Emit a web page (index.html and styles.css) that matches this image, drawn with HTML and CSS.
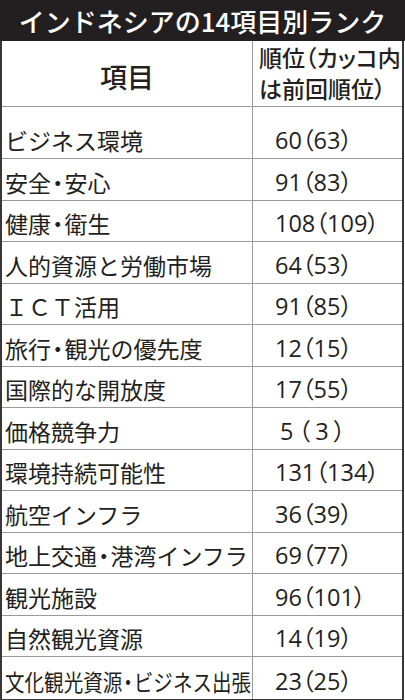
FILE: index.html
```html
<!DOCTYPE html>
<html lang="ja">
<head>
<meta charset="utf-8">
<title>インドネシアの14項目別ランク</title>
<link rel="stylesheet" href="styles.css">
</head>
<body>
<div class="title">インドネシアの14項目別ランク</div>
<div class="rank">
  <div class="cell head-item">項目</div>
  <div class="cell head-rank">順位（カッコ内<br>は前回順位）</div>

  <div class="cell item first">ビジネス環境</div>
  <div class="cell val first">60（63）</div>

  <div class="cell item">安全<span class="dot">・</span>安心</div>
  <div class="cell val">91（83）</div>

  <div class="cell item">健康<span class="dot">・</span>衛生</div>
  <div class="cell val">108（109）</div>

  <div class="cell item">人的資源と労働市場</div>
  <div class="cell val">64（53）</div>

  <div class="cell item">ＩＣＴ活用</div>
  <div class="cell val">91（85）</div>

  <div class="cell item">旅行<span class="dot">・</span>観光の優先度</div>
  <div class="cell val">12（15）</div>

  <div class="cell item">国際的な開放度</div>
  <div class="cell val">17（55）</div>

  <div class="cell item">価格競争力</div>
  <div class="cell val"><span class="pad">5</span>（<span class="pad">3</span>）</div>

  <div class="cell item">環境持続可能性</div>
  <div class="cell val">131（134）</div>

  <div class="cell item">航空インフラ</div>
  <div class="cell val">36（39）</div>

  <div class="cell item">地上交通<span class="dot">・</span>港湾インフラ</div>
  <div class="cell val">69（77）</div>

  <div class="cell item">観光施設</div>
  <div class="cell val">96（101）</div>

  <div class="cell item">自然観光資源</div>
  <div class="cell val">14（19）</div>

  <div class="cell item last"><span class="squeeze">文化観光資源<span class="dot">・</span>ビジネス出張</span></div>
  <div class="cell val last">23（25）</div>
</div>
</body>
</html>
```

FILE: styles.css
```css
html, body {
  margin: 0;
  padding: 0;
  background: #ffffff;
}

body {
  width: 405px;
  color: #231f20;
  font-family: "Noto Sans CJK JP", "Noto Sans", sans-serif;
}

.title {
  height: 41px;
  background: #231f20;
  color: #ffffff;
  font-size: 26px;
  font-weight: 500;
  line-height: 41px;
  text-align: center;
}

.rank {
  width: 404px;
  box-sizing: border-box;
  display: grid;
  grid-template-columns: 251px 1fr;
  grid-template-rows: 66px 52px repeat(13, 41.5px);
  border-left: 2px solid #3b3738;
  border-right: 2px solid #3b3738;
  border-bottom: 2px solid #3b3738;
}

.cell {
  box-sizing: border-box;
  border-bottom: 1.5px solid #9a9a9a;
  display: flex;
  align-items: flex-end;
  padding-bottom: 6px;
  font-size: 23px;
  line-height: 23px;
  white-space: nowrap;
}

.cell.last {
  border-bottom: none;
}

.item {
  border-right: 1.5px solid #9a9a9a;
  padding-left: 3px;
}

.head-item {
  border-right: 1.5px solid #9a9a9a;
  justify-content: center;
  align-items: center;
  padding: 6px 0 0 0;
  font-size: 27px;
  font-weight: 500;
}

.head-rank {
  align-items: center;
  padding: 0 0 2px 6px;
  font-size: 23px;
  line-height: 31px;
  font-weight: 500;
  font-feature-settings: "palt";
}

.val {
  padding-left: 22px;
  font-family: "Open Sans", "Noto Sans CJK JP", sans-serif;
  font-size: 23.5px;
  line-height: 23px;
  font-feature-settings: "palt";
}

.dot {
  font-feature-settings: "palt";
  padding: 0 1px;
}

.pad {
  padding: 0 5px;
}

.squeeze {
  display: inline-block;
  transform: scaleX(0.85);
  transform-origin: left bottom;
}
```
